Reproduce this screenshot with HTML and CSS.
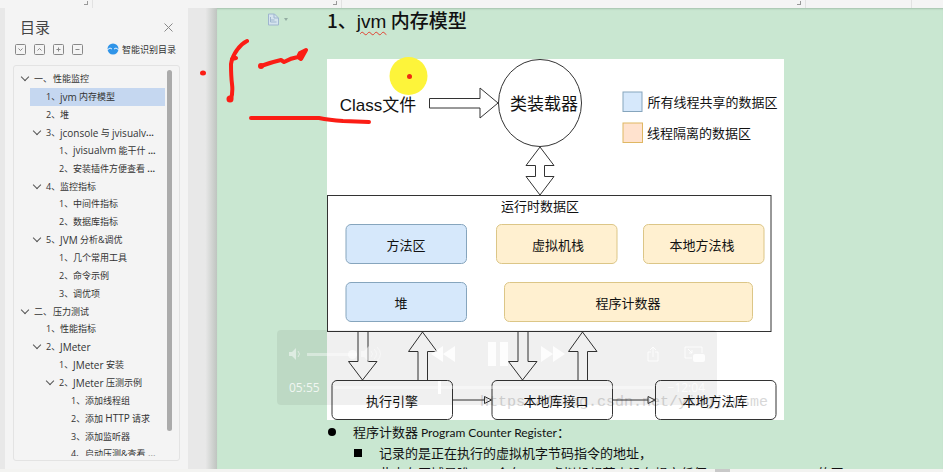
FILE: index.html
```html
<!DOCTYPE html>
<html lang="zh-CN">
<head>
<meta charset="utf-8">
<title>jvm 内存模型</title>
<link rel="stylesheet" href="styles.css">
</head>
<body>
<header class="ribbon">
  <div class="group g1"><i class="corner"></i></div>
  <div class="group g2"><i class="corner"></i></div>
  <div class="group g3"><i class="corner"></i></div>
  <div class="group g4"></div>
</header>
<main class="workspace">
  <aside class="sidebar">
    <div class="side-head">
      <h2>目录</h2>
      <button class="icon-btn" aria-label="关闭"><svg width="9" height="9" viewBox="0 0 9 9"><path d="M.5.5l8 8M8.5.5l-8 8"/></svg></button>
    </div>
    <div class="side-tools">
      <button class="icon-btn" aria-label="展开"><svg width="11" height="11" viewBox="0 0 11 11"><rect x=".5" y=".5" width="10" height="10" rx="1"/><path d="M3.5 4.5l2 2 2-2"/></svg></button>
      <button class="icon-btn" aria-label="收起"><svg width="11" height="11" viewBox="0 0 11 11"><rect x=".5" y=".5" width="10" height="10" rx="1"/><path d="M3.5 6.5l2-2 2 2"/></svg></button>
      <button class="icon-btn" aria-label="增加"><svg width="11" height="11" viewBox="0 0 11 11"><rect x=".5" y=".5" width="10" height="10" rx="1"/><path d="M3.5 5.5h4M5.5 3.5v4"/></svg></button>
      <button class="icon-btn" aria-label="减少"><svg width="11" height="11" viewBox="0 0 11 11"><rect x=".5" y=".5" width="10" height="10" rx="1"/><path d="M3.5 5.5h4"/></svg></button>
      <button class="smart"><svg width="12" height="12" viewBox="0 0 12 12"><circle cx="6" cy="6" r="5.5" fill="#2f94e8"/><path d="M0 7l3-2 2 1M12 7L9 5 7 6" fill="none" stroke="#e8f4ff"/></svg>智能识别目录</button>
    </div>
    <nav class="tree">
      <ul>
        <li class="l0 open"><span class="no">一、</span>性能监控</li>
        <li class="l1 current"><span class="no">1、</span><span class="en">jvm</span> 内存模型</li>
        <li class="l1"><span class="no">2、</span>堆</li>
        <li class="l1 open"><span class="no">3、</span><span class="en">jconsole</span> 与 <span class="en">jvisualv</span> <b>...</b></li>
        <li class="l2"><span class="no">1、</span><span class="en">jvisualvm</span> 能干什 <b>...</b></li>
        <li class="l2"><span class="no">2、</span>安装插件方便查看 <b>...</b></li>
        <li class="l1 open"><span class="no">4、</span>监控指标</li>
        <li class="l2"><span class="no">1、</span>中间件指标</li>
        <li class="l2"><span class="no">2、</span>数据库指标</li>
        <li class="l1 open"><span class="no">5、</span><span class="en">JVM</span> 分析&amp;调优</li>
        <li class="l2"><span class="no">1、</span>几个常用工具</li>
        <li class="l2"><span class="no">2、</span>命令示例</li>
        <li class="l2"><span class="no">3、</span>调优项</li>
        <li class="l0 open"><span class="no">二、</span>压力测试</li>
        <li class="l1"><span class="no">1、</span>性能指标</li>
        <li class="l1 open"><span class="no">2、</span><span class="en">JMeter</span></li>
        <li class="l2"><span class="no">1、</span><span class="en">JMeter</span> 安装</li>
        <li class="l2 open"><span class="no">2、</span><span class="en">JMeter</span> 压测示例</li>
        <li class="l3"><span class="no">1、</span>添加线程组</li>
        <li class="l3"><span class="no">2、</span>添加 <span class="en">HTTP</span> 请求</li>
        <li class="l3"><span class="no">3、</span>添加监听器</li>
        <li class="l3"><span class="no">4、</span>启动压测&amp;查看 <b>...</b></li>
      </ul>
      <div class="scrollbar"></div>
    </nav>
  </aside>
  <div class="gutter"></div>
  <article class="page">
    <div class="margin">
      <svg width="22" height="13" viewBox="0 0 22 13"><path d="M1.500 1h6l4 4v7h-10z" fill="#d5e4ee" stroke="#9fb6cf"/><path d="M7 1v4h4M3.500 4v5h6M3.500 7h4" fill="none" stroke="#9fb6cf"/><path d="M17 5h4l-2 3z" fill="#93ada2"/></svg>
    </div>
    <div class="content">
      <h1>1、<span class="misspelt">jvm</span> 内存模型</h1>
      <svg class="figure" width="457" height="361" viewBox="327 59 457 361">
        <rect x="327" y="59" width="457" height="361" fill="#fff"/>
        <text class="mark" x="480" y="406">https://blog.csdn.net/yingjiusme</text>
        <g class="line">
          <path d="M429.500 98.500H480V88l18 15-18 15v-10h-50.500z"/>
          <ellipse cx="540" cy="103" rx="41.500" ry="43.500"/>
          <path d="M540 147l14 18.500h-9.500v11h9.500L540 195l-14-18.500h9.500v-11H526z"/>
          <rect x="327.500" y="195.500" width="443.500" height="136"/>
          <path d="M358 332v29.500h-9.500l14 18.500 14.500-18.500h-9V332"/>
          <path d="M418 380v-28.500h-9.500l14-19.500 14.500 19.500h-9.500V380"/>
          <path d="M518 332v29.500h-9.500l14 18.500 14.500-18.500h-9V332"/>
          <path d="M578 380v-28.500h-9.500l14-19.500 14.500 19.500h-9.500V380"/>
          <rect x="332" y="380.500" width="120.500" height="39" rx="5"/>
          <rect x="492" y="380.500" width="120.500" height="39" rx="5"/>
          <rect x="655.500" y="380.500" width="120.500" height="39" rx="5"/>
          <path d="M452.500 400H484.500M612.500 400H648M484.500 396.500l7 3.500-7 3.500zM648 396.500l7 3.500-7 3.500z"/>
        </g>
        <g class="shared">
          <rect x="623" y="92" width="19" height="19.500"/>
          <rect x="346" y="224.500" width="120.500" height="39" rx="5"/>
          <rect x="346" y="282.500" width="120.500" height="39" rx="5"/>
        </g>
        <g class="private">
          <rect class="key" x="623" y="123" width="19.500" height="19.500"/>
          <rect x="496.500" y="224.500" width="120.500" height="39" rx="5"/>
          <rect x="643.500" y="224.500" width="120.500" height="39" rx="5"/>
          <rect x="504.500" y="282.500" width="248" height="39" rx="5"/>
        </g>
        <g class="big">
          <text x="378" y="111">Class文件</text>
          <text x="544" y="110">类装载器</text>
        </g>
        <g class="label">
          <text x="712.500" y="107">所有线程共享的数据区</text>
          <text x="699" y="138">线程隔离的数据区</text>
          <text x="540" y="211">运行时数据区</text>
          <text x="406" y="250">方法区</text>
          <text x="558" y="250">虚拟机栈</text>
          <text x="702" y="250">本地方法栈</text>
          <text x="401" y="308">堆</text>
          <text x="628" y="308">程序计数器</text>
          <text x="392" y="406">执行引擎</text>
          <text x="556" y="406">本地库接口</text>
          <text x="715" y="406">本地方法库</text>
        </g>
      </svg>
      <ul class="notes">
        <li>程序计数器 <span class="latin">Program Counter Register</span>：
          <ul>
            <li>记录的是正在执行的虚拟机字节码指令的地址，</li>
            <li class="plain">此内存区域是唯一一个在 <span class="latin">Java</span> 虚拟机规范中没有规定任何 <span class="latin">OutOfMemoryError</span> 的区</li>
          </ul>
        </li>
      </ul>
    </div>
  </article>

  <section class="player" aria-label="播放控制">
    <div class="controls">
      <div class="volume">
        <svg width="14" height="12" viewBox="0 0 14 12"><path d="M0 4h3l4-4v12L3 8H0z"/><path class="stroke" d="M9 3q3 3 0 6"/></svg>
        <input class="vol" type="range" aria-label="音量" value="100">
        <svg width="22" height="16" viewBox="0 0 22 16"><path d="M0 5h3l5-5v16l-5-5H0z"/><path class="stroke" d="M10 5q3 3 0 6M13 3q5 5 0 10M16 1q7 7 0 14"/></svg>
      </div>
      <div class="transport">
        <button aria-label="后退"><svg width="24" height="16" viewBox="0 0 24 16"><path d="M12 0v16L0 8zM24 0v16L12 8z"/></svg></button>
        <button aria-label="暂停"><svg width="20" height="24" viewBox="0 0 20 24"><path d="M0 0h8v24H0zM12 0h8v24h-8z"/></svg></button>
        <button aria-label="快进"><svg width="24" height="16" viewBox="0 0 24 16"><path d="M0 0v16l12-8zM12 0v16l12-8z"/></svg></button>
      </div>
      <div class="extras">
        <button aria-label="共享"><svg width="12" height="16" viewBox="0 0 12 16"><path class="stroke" d="M4 6H1v9h10V6H8M6 11V1M3 4l3-3 3 3"/></svg></button>
        <button aria-label="画中画"><svg width="21" height="17" viewBox="0 0 21 17"><path class="stroke" d="M8 12H1V1h17v6M4 3l4 4M8 4v3H5"/><rect x="9" y="8" width="12" height="8" rx="2"/></svg></button>
      </div>
    </div>
    <div class="timeline">
      <span>05:55</span>
      <input class="seek" type="range" aria-label="进度" value="33">
      <span>−12:04</span>
    </div>
  </section>

  <svg class="ink" width="440" height="130" viewBox="0 0 440 130">
    <circle cx="408.500" cy="76" r="19" fill="#fdf43a"/>
    <circle cx="409.500" cy="76.500" r="2.500" fill="#ee2a12"/>
    <ellipse cx="203" cy="73" rx="3" ry="2.500" fill="#fb1d15"/>
    <path d="M247 41q-6 3-10 9-5 7-6 14 0 12 1 20 1 8-1 15M232 59l4-1M261 66q11-4 20-6l3 2q7-4 14-5l3 2 5-9-6 3-2 4M251 118h68q10 2 24 3l26 1"/>
    <circle cx="230" cy="99" r="3.500" fill="#fb1d15"/>
    <circle cx="261" cy="66" r="3" fill="#fb1d15"/>
  </svg>
</main>
<footer class="status"><i class="grip"></i></footer>
</body>
</html>
```
FILE: styles.css
```css
* { box-sizing: border-box; }
body {
  margin: 0;
  height: 100vh;
  display: flex;
  flex-direction: column;
  overflow: hidden;
  background: #e8e8e8;
  font-family: "Open Sans", "Noto Sans CJK SC", sans-serif;
  color: #333;
}
h1, h2, ul { margin: 0; padding: 0; }
ul { list-style: none; }
button { border: 0; padding: 0; background: none; font: inherit; color: inherit; display: flex; align-items: center; }
svg { display: block; flex: none; }

.ribbon { flex: none; height: 8px; display: flex; background: #f4f4f4; }
.group { display: flex; justify-content: flex-end; border-right: 1px solid #e2e2e2; }
.g1 { flex: 0 0 93px; }
.g2 { flex: 0 0 249px; }
.g3 { flex: 0 0 464px; }
.g4 { flex: 0 0 106px; }
.corner { width: 4px; height: 4px; margin-right: 4px; margin-top: 1px; border: solid #999; border-width: 0 1px 1px 0; }

.workspace { position: relative; flex: 1; min-height: 0; display: flex; }

.sidebar { flex: 0 0 183px; margin-left: 5px; padding: 9px 8px 8px; background: #f4f4f4; display: flex; flex-direction: column; }
.side-head { display: flex; justify-content: space-between; align-items: center; height: 20px; padding: 0 7px; }
.side-head h2 { font-size: 15px; line-height: 20px; font-weight: 400; color: #444; }
.icon-btn svg { fill: none; stroke: #888; }
.side-tools { display: flex; align-items: center; gap: 8px; height: 24px; padding-left: 2px; font-size: 9px; }
.smart { gap: 3px; margin-left: 16px; white-space: nowrap; }

.tree { position: relative; flex: 1; min-height: 0; margin-top: 4px; padding-bottom: 4px; border: 1px solid #e3e3e3; border-radius: 3px; font-size: 9px; }
.tree ul { height: 100%; overflow: hidden; padding-top: 4px; }
.tree li { display: flex; align-items: center; height: calc((100% + 7px) / 22); margin-right: 14px; white-space: pre; }
.tree .no { flex: none; width: 14px; }
.tree .en { font-size: 10px; }
.tree .l0 .no { width: 19px; }
.tree li::before { content: ""; flex: none; width: 5px; height: 5px; margin-right: 6px; margin-bottom: 3px; border: solid transparent; border-width: 0 1px 1px 0; transform: rotate(45deg); }
.tree li.open::before { border-color: #555; }
.l0 { padding-left: 8px; }
.l1 { padding-left: 20px; }
.l2 { padding-left: 33px; }
.l3 { padding-left: 45px; }
.tree .current { background: #c5d7f0; margin-left: 16px; padding-left: 4px; }
.scrollbar { position: absolute; top: 4px; right: 7px; bottom: 29px; width: 5px; border-radius: 3px; background: #ababab; }

.gutter { flex: 0 0 29px; background: linear-gradient(90deg, #e8e8e8 60%, #bfc4c0); }

.page { flex: 1; min-width: 0; display: grid; grid-template-columns: 110px 1fr; overflow: hidden; background: #c9e7d1; box-shadow: inset 0 2px 2px -1px #a5c1ad; color: #111; }
.margin { display: flex; justify-content: flex-end; align-items: flex-start; padding: 5px 38px 0 0; }
h1 { height: 51px; line-height: 24px; font-size: 19px; font-weight: 500; font-family: "Noto Sans CJK SC", sans-serif; white-space: nowrap; }
.misspelt { font-family: "Liberation Sans", sans-serif; text-decoration: underline wavy #e04030 1px; text-underline-offset: 3px; }

.figure { max-width: 100%; font-family: "Liberation Sans", "Noto Sans CJK SC", sans-serif; }
.line { fill: none; stroke: #333; }
.shared { fill: #d6e8fb; stroke: #86a5bd; }
.private { fill: #fff0d0; stroke: #dcc687; }
.private .key { fill: #ffe2ce; stroke: #dfb763; }
.big { font-size: 17px; text-anchor: middle; fill: #111; }
.label { font-size: 13px; text-anchor: middle; fill: #111; }
.mark { font-family: "Liberation Mono", monospace; font-size: 15px; fill: #d8d8d8; }

.notes { padding-left: 26px; font-size: 13px; line-height: 20px; font-family: "Noto Sans CJK SC", sans-serif; white-space: nowrap; margin-top: 2px; }
.notes .latin { font-family: Lato, sans-serif; font-size: 12px; }
.notes ul { padding-left: 26px; }
.notes li { position: relative; }
.notes li::before { content: ""; position: absolute; left: -25px; top: 6px; width: 8px; height: 8px; border-radius: 50%; background: #000; }
.notes ul li::before { border-radius: 0; }
.notes .plain::before { display: none; }

.player { position: absolute; left: 277px; top: 322px; width: 440px; height: 75px; padding: 6px 12px; border-radius: 4px; background: rgba(0, 0, 0, .06); color: rgba(255, 255, 255, .8); font-size: 12px; }
.player svg { fill: rgba(255, 255, 255, .85); }
.player .stroke { fill: none; stroke: rgba(255, 255, 255, .85); }
.player .volume svg { opacity: .6; }
.controls { display: grid; grid-template-columns: 144px 132px 1fr; align-items: center; height: 36px; }
.volume { display: flex; align-items: center; gap: 4px; }
.transport { display: flex; align-items: center; justify-content: space-between; margin-left: -2px; }
.extras { display: flex; align-items: center; justify-content: flex-end; gap: 25px; }
.timeline { display: flex; align-items: center; gap: 14px; height: 30px; }
input[type=range] { appearance: none; margin: 0; min-width: 0; height: 14px; background: linear-gradient(rgba(255, 255, 255, .4), rgba(255, 255, 255, .4)) center / 100% 3px no-repeat; }
.vol { width: 50px; }
.seek { flex: 1; }
input::-webkit-slider-thumb { appearance: none; width: 3px; height: 13px; background: #fff; }
.vol::-webkit-slider-thumb { width: 9px; height: 9px; border-radius: 50%; opacity: .6; }

.ink { position: absolute; left: 0; top: -8px; pointer-events: none; }
.ink path { fill: none; stroke: #fb1d15; stroke-width: 4; stroke-linecap: round; stroke-linejoin: round; }

.status { flex: none; height: 3px; display: flex; background: #f3f3f1; }
.grip { width: 15px; margin-left: 715px; background: #c9c9c9; }
```
